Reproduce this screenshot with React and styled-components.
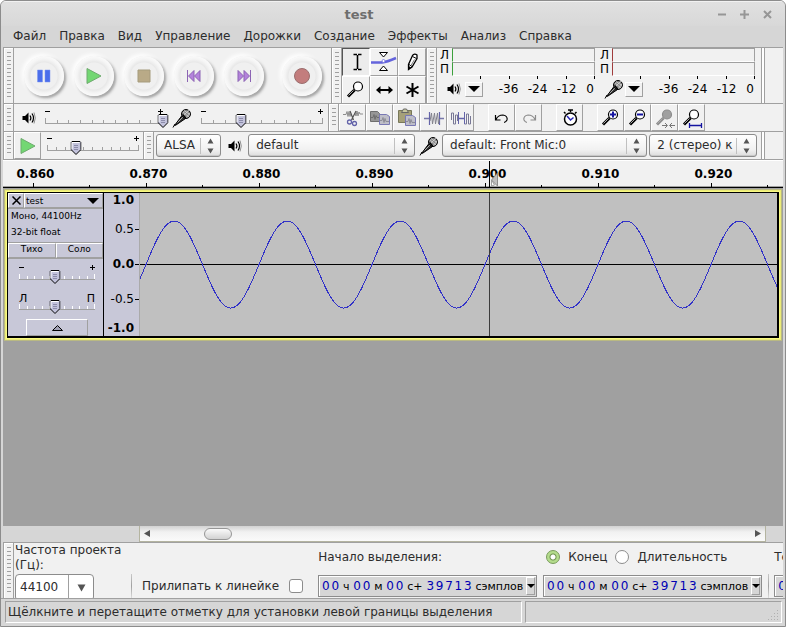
import { useState } from 'react';
import styled, { createGlobalStyle, css } from 'styled-components';

const COLOR = {
  frame: '#d6d6d6',
  bar: '#f1f1f1',
  line: '#a0a0a0',
  canvas: '#a0a0a0',
  panel: '#c8c8d8',
  wave: '#c0c0c0',
  signal: '#3232c8',
  digit: '#0000b4',
  text: '#2c2c2c',
};

const MENU = ['Файл', 'Правка', 'Вид', 'Управление', 'Дорожки', 'Создание', 'Эффекты', 'Анализ', 'Справка'];
const TIMES = ['0.860', '0.870', '0.880', '0.890', '0.900', '0.910', '0.920'];
const PERIOD = 113;

const GlobalStyle = createGlobalStyle`
  * { box-sizing: border-box; }
  body { margin: 0; }
  button, input, select {
    font: inherit;
    color: inherit;
    margin: 0;
    padding: 0;
    border: 0;
    border-radius: 0;
    background: none;
  }
  svg { display: block; flex: none; }
`;

/* ---------- icons ---------- */

const SpeakerIcon = () => (
  <svg width="14" height="14" viewBox="0 0 14 14" aria-hidden="true">
    <path d="M0.5 5h2.500l3.500-3.500v11L3 9H0.500z" fill="#000" />
    <path d="M8 4.500q1.800 2.500 0 5M10 2.500q3 4.500 0 9" fill="none" stroke="#000" strokeWidth="1.200" />
    <path d="M12 1.500q2.600 5.500 0 11" fill="none" stroke="#666" strokeWidth="0.700" />
  </svg>
);

const MicIcon = () => (
  <svg width="20" height="20" viewBox="0 0 20 20" aria-hidden="true">
    <path d="M1 19.500L3 16" stroke="#000" />
    <path d="M2.500 17.500L10 7.500l3.500 3L4 17z" fill="#333" stroke="#000" />
    <path d="M5.500 14.500l6-6" stroke="#aaa" />
    <circle cx="14" cy="6" r="4.500" fill="#888" stroke="#000" />
    <path d="M11 4l6 5M12 2.500l6 4M11 8l6-6M14 10l4-5" stroke="#ddd" strokeWidth="0.700" />
    <path d="M10.500 6.500l3.500 4" stroke="#000" strokeWidth="1.500" />
  </svg>
);

const Lens = ({ fill = '#fff', stroke = '#000', mark, children }) => (
  <svg width="22" height="22" viewBox="0 0 22 22" aria-hidden="true">
    <path d="M3 17.500L9.500 11" stroke={stroke} strokeWidth="3" />
    <path d="M3.500 16.500L8.500 11.500" stroke="#aaa" />
    <circle cx="13" cy="7.500" r="4.500" fill={fill} stroke={stroke} strokeWidth="1.200" />
    {mark && <path d={mark} stroke="#1414a0" strokeWidth="2" />}
    {children}
  </svg>
);

const ToolIcon = ({ name }) => (
  <svg width="26" height="26" viewBox="0 0 26 26" fill="none" stroke="#000" aria-hidden="true">
    {name === 'select' && (
      <path d="M10.500 5.500h3.500M15 5.500h3.500M14.500 6v14M10.500 20.500h3.500M15 20.500h3.500" strokeWidth="1.600" />
    )}
    {name === 'envelope' && (
      <>
        <path d="M0 13.500h11q5-0.500 14-4.500" stroke="#6464dc" strokeWidth="2.500" />
        <path d="M8.500 3.500h8L12.500 8zM8.500 21.500h8L12.500 17z" fill="#fff" />
        <circle cx="12.500" cy="12" r="1.500" fill="#fff" stroke="#6464dc" strokeWidth="0.700" />
      </>
    )}
    {name === 'draw' && (
      <>
        <path d="M9.500 20.500v-5l4-9q2-2.500 4.500-0.500v3.500L13 18z" fill="#fff" strokeWidth="1.300" />
        <path d="M9.500 20.500v-3l2 1zM10 15.500l3 2M13.500 7.500l4 2" fill="#000" />
        <path d="M15.500 10.500l-3.500 6" stroke="#777" />
      </>
    )}
    {name === 'shift' && (
      <>
        <path d="M7 13h13" strokeWidth="2" />
        <path d="M5 13l4.500-4v8zM22 13l-4.500-4v8z" fill="#000" stroke="none" />
      </>
    )}
    {name === 'multi' && <path d="M13.500 6v14M7.500 9.500l12 7M19.500 9.500l-12 7" strokeWidth="2" />}
  </svg>
);

const EditIcon = ({ name }) => (
  <svg width="22" height="22" viewBox="0 0 22 22" fill="none" aria-hidden="true">
    {name === 'cut' && (
      <>
        <path d="M1 7.500h3l1-3 1 5 1-5 1 5 1-3M13 6l1 3 1-5 1 5 1-4 1 2h3" stroke="#8c8c8c" />
        <path d="M8 4l3.500 9M14 4l-4.500 9" stroke="#555" strokeWidth="1.200" />
        <circle cx="7.500" cy="15" r="2" stroke="#6464aa" strokeWidth="1.300" />
        <circle cx="12.500" cy="16.500" r="2" stroke="#6464aa" strokeWidth="1.300" />
      </>
    )}
    {name === 'copy' && (
      <>
        <path d="M1.500 4.500h7l2 2v8h-9z" fill="#969696" stroke="#6e6e6e" />
        <path d="M2 10.500h2l1-3 1 5 1-4 1 2h2" stroke="#6e6e6e" />
        <path d="M10.500 7.500h7l3 2v8h-10z" fill="#bebec8" stroke="#7878b4" />
        <path d="M11 13.500h2l1-3 1 5 1-4 1 3h3" stroke="#8c8c96" />
      </>
    )}
    {name === 'paste' && (
      <>
        <path d="M2.500 3.500h13v12h-13z" fill="#a5a078" stroke="#78785a" />
        <path d="M5.500 5.500h7l-2-3.500h-3z" fill="#c8c8a0" stroke="#666" />
        <path d="M9.500 8.500h7l3 2v8h-10z" fill="#bebec8" stroke="#7878b4" />
        <path d="M10 14.500h2l1-3 1 5 1-4 1 3h3" stroke="#8c8c96" />
      </>
    )}
    {name === 'trim' && (
      <>
        <path d="M1 11.500h5M17 11.500h4" stroke="#7878aa" strokeWidth="1.500" />
        <path d="M6.500 5v13M16.500 5v13" stroke="#6464aa" strokeWidth="1.200" />
        <path d="M7 14l1.500-8 1 11 2-11 1 11 2-11 1 11 1-5" stroke="#82828c" />
      </>
    )}
    {name === 'silence' && (
      <>
        <path d="M8 11.500h6" stroke="#6464aa" strokeWidth="1.500" />
        <path d="M1.500 13v-7h2v11h2v-9h2v6M14.500 5v12h2V7h2v10h2V9" stroke="#787896" />
        <path d="M8.500 5v12M14.500 5v12" stroke="#6464aa" />
      </>
    )}
    {name === 'undo' && <path d="M4.500 8v5h5M5 12.500q2-4.500 7-4.500 5 1 4 5-1 2-3 2.500" stroke="#000" strokeWidth="1.200" />}
    {name === 'redo' && <path d="M17.500 8v5h-5M17 12.500q-2-4.500-7-4.500-5 1-4 5 1 2 3 2.500" stroke="#8c8c8c" strokeWidth="1.200" />}
    {name === 'timer' && (
      <>
        <path d="M9 3h5M11.500 3v2M16 6.500l1.500-1.500M6.500 6.500L5 5" stroke="#000" strokeWidth="1.500" />
        <circle cx="11.500" cy="12" r="6" fill="#fff" stroke="#000" strokeWidth="1.500" />
        <path d="M8 9l3.500 4 3-2.500" stroke="#2828b4" strokeWidth="1.500" />
      </>
    )}
  </svg>
);

const TransportIcon = ({ name }) => (
  <svg width="20" height="20" viewBox="0 0 20 20" aria-hidden="true">
    {name === 'pause' && <path d="M3.500 4h5v12h-5zM11 4h5v12h-5z" fill="#4b6eeb" stroke="#7d96f0" strokeWidth="0.500" />}
    {name === 'play' && <path d="M3 2.500l14 7.500-14 7.500z" fill="#73d773" stroke="#6eaa6e" />}
    {name === 'stop' && <path d="M4 4h12v12H4z" fill="#b9aa87" stroke="#a59b7d" />}
    {name === 'prev' && <path d="M3.500 4v12M10 4.500v11L4.500 10zM16 4.500v11L10.500 10z" fill="#b482dc" stroke="#8c64b4" />}
    {name === 'next' && <path d="M16.500 4v12M10 4.500v11l5.500-5.500zM4 4.500v11L9.500 10z" fill="#b482dc" stroke="#8c64b4" />}
    {name === 'record' && <circle cx="10" cy="10" r="7.500" fill="#c37d7d" stroke="#9b6e6e" />}
  </svg>
);

const Arrows = () => (
  <svg width="7" height="16" viewBox="0 0 7 16" aria-hidden="true">
    <path d="M0.500 5.500L3.500 0.500l3 5zM0.500 10.500l3 5 3-5z" fill="#555" />
  </svg>
);

const Caret = ({ width = 12 }) => (
  <svg width={width} height={width / 2} viewBox="0 0 12 6" aria-hidden="true">
    <path d="M0 0h12L6 6z" fill="#000" />
  </svg>
);

/* ---------- controls ---------- */

function Slider({ label, value, signs, light }) {
  const [current, setCurrent] = useState(value);
  return (
    <SliderBox>
      <Signs>
        {signs ? (
          signs.map((sign) => <span key={sign}>{sign}</span>)
        ) : (
          <>
            <svg width="5" height="5"><path d="M0 2.500h5" stroke="#000" /></svg>
            <svg width="5" height="5"><path d="M0 2.500h5M2.500 0v5" stroke="#000" /></svg>
          </>
        )}
      </Signs>
      <Scale aria-hidden="true" $light={light}>
        {Array.from({ length: 11 }, (_, i) => <i key={i} />)}
      </Scale>
      <Thumb width="11" height="14" viewBox="0 0 11 14" style={{ left: `${current}%` }} aria-hidden="true">
        <path d="M1.500 0.500h8l1 1v7l-5 5-5-5v-7z" fill="#c3c3dc" stroke="#000" />
        <path d="M1.500 8V1.500H9" fill="none" stroke="#fff" />
        <path d="M3.500 4.500h4M3.500 6.500h4M3.500 8.500h4" stroke="#8c8caa" />
      </Thumb>
      <Range type="range" aria-label={label} value={current} onChange={(e) => setCurrent(Number(e.target.value))} />
    </SliderBox>
  );
}

function Combo({ label, value, grow }) {
  return (
    <ComboBox $grow={grow}>
      <select aria-label={label}>
        <option>{value}</option>
      </select>
      <ComboArrows>
        <Arrows />
      </ComboArrows>
    </ComboBox>
  );
}

function Meter({ label, color, children }) {
  return (
    <MeterBox aria-label={label}>
      <Channel $color={color}><span>Л</span><i /></Channel>
      <Channel $color={color}><span>П</span><i /></Channel>
      <MeterTicks aria-hidden="true"><i /><i /><i /><i /><i /></MeterTicks>
      <MeterScale>
        <IconSlot>{children}</IconSlot>
        <DropButton type="button" aria-label={`${label}: параметры`}><Caret /></DropButton>
        <MeterNumbers><span>-36</span><span>-24</span><span>-12</span><span>0</span></MeterNumbers>
      </MeterScale>
    </MeterBox>
  );
}

function TimeField({ label }) {
  const digits = (text) => text.split('').map((digit, i) => <b key={i}>{digit}</b>);
  return (
    <TimeBox role="group" aria-label={label}>
      <TimeText>
        {digits('00')}<Unit>ч</Unit>{digits('00')}<Unit>м</Unit>{digits('00')}<Unit>с+</Unit>
        {digits('39713')}<Unit>сэмплов</Unit>
      </TimeText>
      <TimeDrop type="button" aria-label={`${label}: формат`}><Caret width={8} /></TimeDrop>
    </TimeBox>
  );
}

function Waveform() {
  const points = [];
  for (let x = 0; x <= 3000; x += 1) {
    points.push(`${x},${(71.5 - 43.5 * Math.sin(((x - 6) / PERIOD) * 2 * Math.PI)).toFixed(1)}`);
  }
  return (
    <WaveBox>
      <svg width="3000" height="143" fill="none" role="img" aria-label="Форма волны">
        <path d="M0 71.500h3000" stroke="#000" shapeRendering="crispEdges" />
        <polyline points={points.join(' ')} stroke={COLOR.signal} shapeRendering="crispEdges" />
        <path d="M349.500 0v143" stroke="#3c3c3c" shapeRendering="crispEdges" />
      </svg>
    </WaveBox>
  );
}

function App() {
  return (
    <Window>
      <GlobalStyle />
      <TitleBar>
        <h1>test</h1>
        <WindowButtons>
          <button type="button" aria-label="Свернуть"><svg width="9" height="9"><path d="M1 4.500h8" stroke="#969696" strokeWidth="2" /></svg></button>
          <button type="button" aria-label="Развернуть"><svg width="9" height="9"><path d="M0 4.500h9M4.500 0v9" stroke="#969696" strokeWidth="2" /></svg></button>
          <button type="button" aria-label="Закрыть"><svg width="9" height="9"><path d="M1 1l7 7M8 1L1 8" stroke="#969696" strokeWidth="2" /></svg></button>
        </WindowButtons>
      </TitleBar>
      <Menu>
        {MENU.map((item) => <button type="button" key={item}>{item}</button>)}
      </Menu>

      <Body>
        <Bar $height={56}>
          <Grip />
          <Transport>
            {['pause', 'play', 'stop', 'prev', 'next', 'record'].map((name) => (
              <RoundButton type="button" key={name} aria-label={name}><span><TransportIcon name={name} /></span></RoundButton>
            ))}
          </Transport>
          <Grip />
          <Tools>
            <ToolButton type="button" aria-label="Выделение" $active><ToolIcon name="select" /></ToolButton>
            <ToolButton type="button" aria-label="Огибающая"><ToolIcon name="envelope" /></ToolButton>
            <ToolButton type="button" aria-label="Карандаш"><ToolIcon name="draw" /></ToolButton>
            <ToolButton type="button" aria-label="Масштаб"><Lens /></ToolButton>
            <ToolButton type="button" aria-label="Перемещение"><ToolIcon name="shift" /></ToolButton>
            <ToolButton type="button" aria-label="Мультиинструмент"><ToolIcon name="multi" /></ToolButton>
          </Tools>
          <Grip />
          <Meters>
            <Meter label="Уровень воспроизведения" color="#3ca03c"><SpeakerIcon /></Meter>
            <Meter label="Уровень записи" color="#a03c3c"><MicIcon /></Meter>
          </Meters>
          <BarEnd />
        </Bar>

        <Bar $height={28}>
          <Grip />
          <Mixer>
            <SpeakerIcon />
            <Slider label="Громкость воспроизведения" value={100} />
            <MicIcon />
            <Slider label="Громкость записи" value={33} />
          </Mixer>
          <Grip />
          <ButtonSet>
            {['cut', 'copy', 'paste', 'trim', 'silence'].map((name) => (
              <SquareButton type="button" key={name} aria-label={name}><EditIcon name={name} /></SquareButton>
            ))}
          </ButtonSet>
          <ButtonSet $spaced>
            <SquareButton type="button" aria-label="undo"><EditIcon name="undo" /></SquareButton>
            <SquareButton type="button" aria-label="redo"><EditIcon name="redo" /></SquareButton>
          </ButtonSet>
          <ButtonSet $spaced>
            <SquareButton type="button" aria-label="timer"><EditIcon name="timer" /></SquareButton>
          </ButtonSet>
          <ButtonSet $spaced>
            <SquareButton type="button" aria-label="Приблизить"><Lens mark="M10 7.500h6M13 4.500v6" /></SquareButton>
            <SquareButton type="button" aria-label="Отдалить"><Lens mark="M10 7.500h6" /></SquareButton>
            <SquareButton type="button" aria-label="Вместить выделение">
              <Lens fill="#a0a0a0" stroke="#8c8c8c">
                <path d="M8 18.500h5M16 18.500h5M11 16l2.500 2.500-2.500 2.500M18 16l-2.500 2.500 2.500 2.500" fill="none" stroke="#777" />
              </Lens>
            </SquareButton>
            <SquareButton type="button" aria-label="Вместить проект">
              <Lens><path d="M8.500 16v5M20.500 16v5M8 18.500h12" stroke="#1414a0" strokeWidth="1.300" /></Lens>
            </SquareButton>
          </ButtonSet>
        </Bar>

        <Bar $height={28}>
          <Grip />
          <SquareButton type="button" aria-label="Воспроизвести со скоростью"><TransportIcon name="play" /></SquareButton>
          <Speed><Slider label="Скорость" value={32} /></Speed>
          <Grip />
          <Devices>
            <Combo label="Аудиосистема" value="ALSA" grow={64} />
            <IconSlot><SpeakerIcon /></IconSlot>
            <Combo label="Устройство воспроизведения" value="default" grow={167} />
            <IconSlot><MicIcon /></IconSlot>
            <Combo label="Устройство записи" value="default: Front Mic:0" grow={206} />
            <Combo label="Каналы" value="2 (стерео) к" grow={107} />
          </Devices>
          <BarEnd />
        </Bar>

        <Ruler>
          <RulerLabels>{TIMES.map((time) => <span key={time}>{time}</span>)}</RulerLabels>
          <svg width="100%" height="5" aria-hidden="true">
            <pattern id="ticks" x="30" width={PERIOD} height="5" patternUnits="userSpaceOnUse">
              <path d="M0.500 1v4M56.500 3v2" stroke="#000" />
            </pattern>
            <rect width="100%" height="5" fill="url(#ticks)" />
          </svg>
          <PlayHead width="10" height="27" viewBox="0 0 10 27" aria-hidden="true">
            <path d="M0.500 0v27" stroke="#000" />
            <path d="M2.500 19v6l3-1z" fill="#fff" stroke="#a0a0a0" />
            <path d="M8.500 12v13l-6-6z" fill="#c0c0c0" stroke="#8c8c8c" />
          </PlayHead>
        </Ruler>

        <Canvas>
          <Track>
            <TrackPanel>
              <TrackTitle>
                <button type="button" aria-label="Закрыть дорожку">
                  <svg width="9" height="9"><path d="M0.500 0.500l8 8M8.500 0.500l-8 8" stroke="#000" strokeWidth="1.500" /></svg>
                </button>
                <TrackName type="button">test<Caret /></TrackName>
              </TrackTitle>
              <TrackInfo>
                <span>Моно, 44100Hz</span>
                <span>32-bit float</span>
              </TrackInfo>
              <TrackSwitches>
                <button type="button">Тихо</button>
                <button type="button">Соло</button>
              </TrackSwitches>
              <TrackSliders>
                <Slider label="Усиление" value={48} light />
                <Slider label="Панорама" value={48} signs={['Л', 'П']} light />
              </TrackSliders>
              <Collapse type="button" aria-label="Свернуть дорожку">
                <svg width="11" height="6"><path d="M0.500 5.500h10L5.500 0.500z" fill="#a0a0b4" stroke="#000" /></svg>
              </Collapse>
            </TrackPanel>
            <Levels>
              <Level $bold><span>1.0</span></Level>
              <Level $tick><span>0.5</span></Level>
              <Level $bold $tick><span>0.0</span></Level>
              <Level $tick><span>-0.5</span></Level>
              <Level $bold><span>-1.0</span></Level>
            </Levels>
            <Waveform />
          </Track>
        </Canvas>

        <ScrollRow>
          <ScrollBar>
            <button type="button" aria-label="Влево"><svg width="6" height="7"><path d="M6 0v7L0 3.500z" fill="#555" /></svg></button>
            <ScrollThumb />
            <button type="button" aria-label="Вправо"><svg width="6" height="7"><path d="M0 0v7l6-3.500z" fill="#555" /></svg></button>
          </ScrollBar>
        </ScrollRow>

        <Bar $height={56}>
          <Grip />
          <Rate>
            <label htmlFor="rate">Частота проекта (Гц):</label>
            <RateBox>
              <input id="rate" defaultValue="44100" />
              <button type="button" aria-label="Выбрать частоту">
                <svg width="9" height="8"><path d="M0.500 0.500h8l-4 7z" fill="#555" /></svg>
              </button>
            </RateBox>
          </Rate>
          <Snap>
            <Divider />
            <label htmlFor="snap">Прилипать к линейке</label>
            <CheckBox type="checkbox" id="snap" />
          </Snap>
          <Selection>
            <SelectionLabel>Начало выделения:</SelectionLabel>
            <TimeField label="Начало выделения" />
          </Selection>
          <Selection>
            <SelectionLabel $inset>
              <Radio type="radio" name="end" id="end" defaultChecked />
              <label htmlFor="end">Конец</label>
              <Radio type="radio" name="end" id="length" />
              <label htmlFor="length">Длительность</label>
            </SelectionLabel>
            <TimeField label="Конец выделения" />
          </Selection>
          <Snap $tight><Divider /></Snap>
          <Selection>
            <SelectionLabel>Те</SelectionLabel>
            <TimeBox><TimeText><b>0</b></TimeText></TimeBox>
          </Selection>
        </Bar>
      </Body>

      <StatusBar>
        <StatusText>Щёлкните и перетащите отметку для установки левой границы выделения</StatusText>
        <StatusText $end>
          <svg width="12" height="12" fill="#b0b0b0" aria-hidden="true">
            <path d="M10 0h1v1h-1zM7 3h1v1H7zM10 3h1v1h-1zM4 6h1v1H4zM7 6h1v1H7zM10 6h1v1h-1zM1 9h1v1H1zM4 9h1v1H4zM7 9h1v1H7zM10 9h1v1h-1z" />
          </svg>
        </StatusText>
      </StatusBar>
    </Window>
  );
}

const raised = css`
  border: 1px solid;
  border-color: #fff ${COLOR.line} ${COLOR.line} #fff;
`;

const center = css`
  display: flex;
  align-items: center;
  justify-content: center;
`;

const Window = styled.main`
  display: flex;
  flex-direction: column;
  min-height: 100vh;
  overflow: hidden;
  border: 1px solid #8c8c8c;
  border-radius: 6px 6px 0 0;
  background: ${COLOR.frame};
  color: ${COLOR.text};
  font-family: 'DejaVu Sans', sans-serif;
  font-size: 12px;
  line-height: 15px;
`;

const TitleBar = styled.header`
  display: flex;
  align-items: center;
  height: 25px;
  padding-right: 8px;
  border-top: 1px solid #f1f1f1;
  background: linear-gradient(#e0e0e0, #d8d8d8);
  h1 {
    flex: 1;
    margin: 0;
    font-size: 13px;
    text-align: center;
    color: #6e6e6e;
  }
`;

const WindowButtons = styled.div`
  display: flex;
  gap: 14px;
  width: 60px;
`;

const Menu = styled.nav`
  display: flex;
  gap: 13px;
  height: 21px;
  padding: 0 12px;
`;

const Body = styled.div`
  display: flex;
  flex: 1;
  flex-direction: column;
  min-width: 0;
  margin: 0 2px;
`;

const Bar = styled.section`
  display: flex;
  height: ${({ $height }) => $height}px;
  overflow: hidden;
  border-top: 1px solid ${COLOR.line};
  background: ${COLOR.bar};
`;

const Grip = styled.div`
  flex: none;
  width: 11px;
  padding: 4px 2px 3px 3px;
  border: 1px solid ${COLOR.line};
  border-width: 0 1px;
  box-shadow: inset 1px 1px #fff;
  background: repeating-linear-gradient(${COLOR.line} 0 1px, ${COLOR.bar} 1px 4px) content-box;
`;

const BarEnd = styled.div`
  width: 4px;
  border: 1px solid ${COLOR.line};
  border-width: 0 1px;
  background: #fff;
  margin-right: 18px;
`;

const Transport = styled.div`
  display: flex;
  align-items: center;
  padding: 0 4px 0 5px;
  button:last-child {
    margin-left: 8px;
  }
`;

const RoundButton = styled.button`
  ${center}
  width: 50px;
  height: 50px;
  span {
    ${center}
    width: 40px;
    height: 40px;
    border-radius: 50%;
    background: radial-gradient(circle at 50% 50%, #f0f0f0 13px, #e8e8e8 14px, #f4f4f4 17px, #fafafa 20px);
    box-shadow: -2px -2px 4px #fff, 2px 2px 3px #a5a5a5, 1px 1px 2px #b4b4b4;
  }
`;

const Tools = styled.div`
  display: grid;
  grid-template-columns: repeat(3, 28px);
  grid-template-rows: 1fr 1fr;
`;

const ToolButton = styled.button`
  ${center}
  ${raised}
  ${({ $active }) => $active && `border-color: #555 #fff #fff #555; background: #ececec;`}
`;

const Meters = styled.div`
  display: flex;
  flex: 1;
  gap: 5px;
  padding: 0 6px 0 3px;
  color: #000;
`;

const MeterBox = styled.div`
  display: flex;
  flex: 1;
  flex-direction: column;
`;

const Channel = styled.div`
  display: flex;
  height: 14px;
  line-height: 14px;
  span {
    width: 12px;
  }
  i {
    flex: 1;
    border: 1px solid;
    border-color: ${COLOR.line} ${COLOR.line} #fff ${({ $color }) => $color};
  }
`;

const MeterTicks = styled.div`
  display: flex;
  justify-content: space-between;
  align-self: flex-end;
  width: 115px;
  height: 3px;
  i {
    width: 1px;
    background: #000;
  }
`;

const IconSlot = styled.div`
  ${center}
  flex: none;
  width: 23px;
`;

const MeterScale = styled.div`
  display: flex;
  align-items: center;
  height: 20px;
  padding-left: 2px;
`;

const MeterNumbers = styled.div`
  display: flex;
  width: 101px;
  margin-left: auto;
  padding-right: 1px;
  span {
    width: 29px;
    text-align: center;
  }
  span:last-child {
    flex: 1;
    text-align: right;
  }
`;

const DropButton = styled.button`
  ${center}
  ${raised}
  width: 18px;
  height: 15px;
`;

const Mixer = styled.div`
  display: grid;
  grid-template-columns: 14px 118px 20px 122px;
  gap: 9px;
  align-items: center;
  padding: 0 5px 0 8px;
`;

const Speed = styled.div`
  width: 102px;
  padding: 1px 4px 0 6px;
`;

const SliderBox = styled.div`
  position: relative;
  height: 24px;
`;

const Signs = styled.div`
  display: flex;
  justify-content: space-between;
  height: 10px;
  padding-top: 3px;
  color: #000;
  line-height: 8px;
`;

const Scale = styled.div`
  display: flex;
  align-items: flex-end;
  justify-content: space-between;
  height: 8px;
  border-bottom: 1px solid ${COLOR.line};
  i {
    width: 1px;
    height: 3px;
    background: ${({ $light }) => ($light ? '#fff' : COLOR.line)};
  }
  i:first-child,
  i:last-child {
    height: 5px;
  }
`;

const Thumb = styled.svg`
  position: absolute;
  top: 8px;
  transform: translateX(-50%);
`;

const Range = styled.input`
  position: absolute;
  inset: 0;
  width: 100%;
  opacity: 0;
  cursor: pointer;
`;

const ButtonSet = styled.div`
  display: flex;
  margin-left: ${({ $spaced }) => ($spaced ? 14 : 0)}px;
`;

const SquareButton = styled.button`
  ${center}
  ${raised}
  flex: none;
  width: 27px;
  height: 27px;
`;

const Devices = styled.div`
  display: flex;
  flex: 1;
  gap: 2px;
  align-items: center;
  padding: 0 4px 0 2px;
`;

const ComboBox = styled.div`
  position: relative;
  flex: ${({ $grow }) => $grow} 1 0;
  min-width: 0;
  height: 23px;
  border: 1px solid #8c8c8c;
  border-radius: 3px;
  background: linear-gradient(#fff, #f1f1f1 70%, #dcdcdc);
  box-shadow: inset 0 -1px #c8c8c8;
  select {
    width: 100%;
    height: 20px;
    padding: 0 20px 0 7px;
    appearance: none;
    outline: none;
  }
`;

const ComboArrows = styled.div`
  position: absolute;
  top: 3px;
  right: 6px;
  padding-left: 6px;
  border-left: 1px solid #c0c0c0;
  pointer-events: none;
`;

const Ruler = styled.div`
  position: relative;
  height: 29px;
  overflow: hidden;
  border-top: 1px solid ${COLOR.line};
  border-bottom: 1px solid #000;
  background: ${COLOR.bar};
  box-shadow: inset 0 1px #fff, inset 0 -1px ${COLOR.line};
`;

const RulerLabels = styled.div`
  display: flex;
  margin-left: -24px;
  padding-top: 7px;
  color: #000;
  font-weight: bold;
  span {
    flex: none;
    width: ${PERIOD}px;
    text-align: center;
  }
`;

const PlayHead = styled.svg`
  position: absolute;
  top: 1px;
  left: 486px;
`;

const Canvas = styled.div`
  flex: 1;
  padding: 2px;
  background: ${COLOR.canvas};
`;

const Track = styled.article`
  display: flex;
  height: 146px;
  border: 1px solid #000;
  border-width: 1px 2px 2px 1px;
  margin: 2px;
  box-shadow: 0 0 0 1px #fafa82, 0 0 0 2px #ebeb78, 0 0 0 3px #b9b982;
`;

const TrackPanel = styled.div`
  display: flex;
  flex: none;
  flex-direction: column;
  width: 96px;
  border-right: 1px solid #000;
  background: ${COLOR.panel};
  color: #000;
  font-size: 9px;
  line-height: 14px;
`;

const TrackTitle = styled.div`
  display: flex;
  height: 16px;
  border-bottom: 1px solid ${COLOR.line};
  button {
    ${center}
    ${raised}
    width: 16px;
    line-height: 12px;
  }
`;

const TrackName = styled.button`
  && {
    flex: 1;
    justify-content: space-between;
    padding: 0 3px 0 1px;
  }
`;

const TrackInfo = styled.div`
  display: flex;
  flex-direction: column;
  gap: 2px;
  height: 33px;
  padding: 0 3px;
`;

const TrackSwitches = styled.div`
  display: flex;
  height: 17px;
  border: 1px solid ${COLOR.line};
  border-width: 1px 0;
  button {
    ${raised}
    flex: 1;
    line-height: 10px;
    padding-bottom: 3px;
  }
`;

const TrackSliders = styled.div`
  display: flex;
  flex-direction: column;
  gap: 6px;
  padding: 3px 8px 0 11px;
  font-size: 11px;
`;

const Collapse = styled.button`
  ${center}
  ${raised}
  width: 62px;
  height: 17px;
  margin: 3px auto 0 18px;
`;

const Levels = styled.div`
  display: grid;
  flex: none;
  grid-template-rows: 1fr 35px 35px 35px 1fr;
  width: 36px;
  border-right: 1px solid #aaa;
  background: ${COLOR.panel};
  color: #000;
`;

const Level = styled.div`
  display: flex;
  align-items: center;
  justify-content: flex-end;
  gap: 1px;
  font-weight: ${({ $bold }) => ($bold ? 'bold' : 'normal')};
  &::after {
    content: '';
    width: 4px;
    height: 1px;
    background: ${({ $tick }) => ($tick ? '#000' : 'transparent')};
  }
  &:first-child {
    align-items: flex-start;
  }
  &:last-child {
    align-items: flex-end;
  }
`;

const WaveBox = styled.div`
  flex: 1;
  min-width: 0;
  overflow: hidden;
  background: ${COLOR.wave};
`;

const ScrollRow = styled.div`
  height: 16px;
  padding: 0 17px 0 136px;
`;

const ScrollBar = styled.div`
  display: flex;
  align-items: center;
  height: 16px;
  padding: 0 4px;
  border: 1px solid #b4b4a0;
  border-width: 0 1px 1px;
  background: linear-gradient(#d2d2d2, #f1f1f1 40%, #fafafa);
  button:last-child {
    margin-left: auto;
  }
`;

const ScrollThumb = styled.div`
  width: 28px;
  height: 12px;
  margin-left: 54px;
  border: 1px solid #969696;
  border-radius: 6px;
  background: linear-gradient(#fafafa, #d2d2d2);
`;

const Rate = styled.div`
  flex: none;
  width: 117px;
  padding-left: 1px;
`;

const RateBox = styled.div`
  display: flex;
  width: 79px;
  height: 27px;
  margin-top: 1px;
  border: 1px solid #8c8c8c;
  border-radius: 4px;
  background: #fff;
  input {
    width: 53px;
    padding-left: 4px;
    border-right: 1px solid ${COLOR.line};
  }
  button {
    ${center}
    flex: 1;
  }
`;

const Snap = styled.div`
  display: flex;
  flex: none;
  align-self: flex-end;
  align-items: center;
  gap: 10px;
  height: 24px;
  margin-right: ${({ $tight }) => ($tight ? 5 : 15)}px;
`;

const Divider = styled.div`
  width: 1px;
  height: 24px;
  background: linear-gradient(#c8c8c8, #a0a0a0, #dcdcdc);
`;

const CheckBox = styled.input`
  width: 14px;
  height: 14px;
  appearance: none;
  border: 1px solid #8c8c8c;
  border-radius: 3px;
  background: #fff;
`;

const Radio = styled.input`
  width: 14px;
  height: 14px;
  appearance: none;
  border: 1px solid #8c8c8c;
  border-radius: 50%;
  background: #fff;
  &:checked {
    border-color: #789b5a;
    background: radial-gradient(circle, #fff 2px, #6e9150 3px, #b4dc8c 4px);
  }
`;

const Selection = styled.div`
  display: flex;
  flex: none;
  flex-direction: column;
  justify-content: flex-end;
  gap: 8px;
  margin-right: 6px;
`;

const SelectionLabel = styled.div`
  display: flex;
  align-items: center;
  gap: 8px;
  height: 20px;
  padding-left: ${({ $inset }) => ($inset ? 3 : 0)}px;
`;

const TimeBox = styled.div`
  display: flex;
  width: 219px;
  height: 22px;
  margin-bottom: 1px;
  padding: 1px;
  border: 1px solid #8c8c8c;
  box-shadow: inset 1px 1px #fff;
  background: ${COLOR.frame};
`;

const TimeText = styled.div`
  display: flex;
  flex: 1;
  align-items: center;
  min-width: 0;
  overflow: hidden;
  padding-left: 1px;
  color: #000;
  white-space: nowrap;
  b {
    width: 10px;
    color: ${COLOR.digit};
    font-weight: normal;
    text-align: center;
  }
`;

const Unit = styled.span`
  padding: 0 3px;
  font-size: 11px;
`;

const TimeDrop = styled.button`
  ${center}
  ${raised}
  flex: none;
  width: 9px;
`;

const StatusBar = styled.footer`
  display: flex;
  gap: 3px;
  padding: 2px 3px 3px 4px;
  border-top: 1px solid ${COLOR.line};
`;

const StatusText = styled.div`
  display: flex;
  flex: ${({ $end }) => ($end ? 255 : 519)} 1 0;
  align-items: ${({ $end }) => ($end ? 'flex-end' : 'center')};
  justify-content: ${({ $end }) => ($end ? 'flex-end' : 'flex-start')};
  height: 22px;
  min-width: 0;
  padding: 0 2px;
  border: 1px solid;
  border-color: ${COLOR.line} #fff #fff ${COLOR.line};
  white-space: nowrap;
`;

export default App;
